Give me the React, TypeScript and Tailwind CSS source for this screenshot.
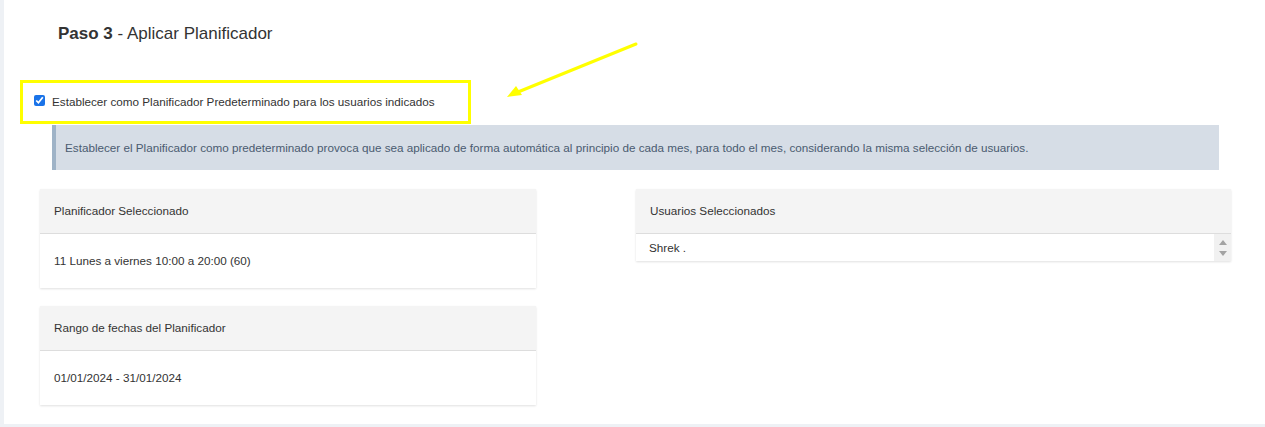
import React from 'react'

const font = { fontFamily: '"Liberation Sans", Arial, sans-serif' }

function Card({ title, value }: { title: string; value: string }) {
  return (
    <div className="bg-white shadow-[0_1px_2px_rgba(0,0,0,0.12)]">
      <div className="h-[45px] bg-[#f4f4f4] border-b border-[#dddddd] flex items-center px-[14px] text-[11.7px] text-[#333]">
        {title}
      </div>
      <div className="h-[54px] flex items-center px-[14px] text-[11.7px] text-[#333]">{value}</div>
    </div>
  )
}

export default function App() {
  return (
    <div className="bg-[#eef1f5] pl-[4px] h-[427px]" style={font}>
      <div className="relative bg-white h-[424px]">
        {/* Title */}
        <div className="pl-[54px] pt-[24px] text-[17px] text-[#333] leading-[20px]">
          <span className="font-bold">Paso 3</span> - Aplicar Planificador
        </div>

        {/* Highlighted checkbox */}
        <div className="ml-[16px] mt-[36px] w-[451px] h-[44px] border-[3px] border-[#ffff00] flex items-center pl-[11px] gap-[7px]">
          <input type="checkbox" defaultChecked className="w-[11px] h-[11px] accent-[#1a73e8] m-0 -mt-[3px]" />
          <span className="text-[11.7px] text-[#333]">Establecer como Planificador Predeterminado para los usuarios indicados</span>
        </div>

        {/* Info note */}
        <div className="ml-[48px] mt-[1px] w-[1167px] h-[45px] bg-[#d6dde6] border-l-[4px] border-[#9fb3c7] flex items-center pl-[9px] text-[11.7px] text-[#4a5b70]">
          Establecer el Planificador como predeterminado provoca que sea aplicado de forma automática al principio de cada mes, para todo el mes, considerando la misma selección de usuarios.
        </div>

        {/* Cards */}
        <div className="flex mt-[19px] pl-[36px]">
          <div className="w-[496px] flex flex-col gap-[18px]">
            <Card title="Planificador Seleccionado" value="11 Lunes a viernes 10:00 a 20:00 (60)" />
            <Card title="Rango de fechas del Planificador" value="01/01/2024 - 31/01/2024" />
          </div>
          <div className="ml-[100px] w-[595px] self-start bg-white shadow-[0_1px_2px_rgba(0,0,0,0.12)]">
            <div className="h-[45px] bg-[#f4f4f4] border-b border-[#dddddd] flex items-center px-[14px] text-[11.7px] text-[#333]">
              Usuarios Seleccionados
            </div>
            <div className="h-[27px] flex">
              <div className="flex-1 flex items-center px-[13px] text-[11.7px] text-[#333]">Shrek .</div>
              <div className="w-[17px] bg-[#f1f1f1] flex flex-col items-center justify-center gap-[6px]">
                <svg width="8" height="5" viewBox="0 0 8 5"><path d="M0 5 L4 0 L8 5 Z" fill="#a3a3a3" /></svg>
                <svg width="8" height="5" viewBox="0 0 8 5"><path d="M0 0 L4 5 L8 0 Z" fill="#a3a3a3" /></svg>
              </div>
            </div>
          </div>
        </div>

        {/* Annotation arrow */}
        <svg className="absolute left-0 top-0 pointer-events-none" width="1261" height="424">
          <line x1="632" y1="44" x2="514" y2="92" stroke="#ffff00" strokeWidth="3" strokeLinecap="round" />
          <path d="M503 97 L512 86 L518 95 Z" fill="#ffff00" />
        </svg>
      </div>
    </div>
  )
}
